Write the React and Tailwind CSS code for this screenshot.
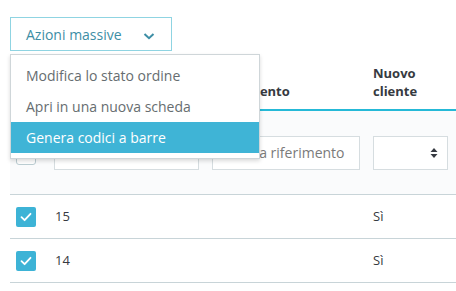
import React from "react";

const Check = () => (
  <span className="flex h-5 w-5 items-center justify-center rounded-[2px] bg-[#3db3d6]">
    <svg width="14" height="14" viewBox="0 0 14 14" fill="none">
      <path d="M2.5 7.2 L5.6 10.2 L11.5 3.8" stroke="white" strokeWidth="1.8" strokeLinecap="round" strokeLinejoin="round" />
    </svg>
  </span>
);

const rows = ["15", "14"];

export default function App() {
  return (
    <div className="relative h-[291px] w-[456px] overflow-hidden bg-white pt-[17px] text-[14px] font-['Open_Sans',sans-serif]">
      <div className="pl-[10px]">
        <button className="flex h-[34px] w-[162px] items-center justify-between border border-[#8fd4e2] pl-[15px] pr-[15px] text-[#3d8ea5]">
          <span>Azioni massive</span>
          <svg className="mt-[3px]" width="14" height="10" viewBox="0 0 14 10" fill="none">
            <path d="M2.5 3 L7 7.2 L11.5 3" stroke="#3d8ea5" strokeWidth="2" />
          </svg>
        </button>
      </div>

      <div className="ml-[10px]">
        <div className="grid h-[60px] grid-cols-[44px_158px_161px_1fr] items-end border-b-2 border-[#25b9d7] pb-[9px] text-[13px] font-bold leading-[18px] text-[#363a41]">
          <div />
          <div>ID</div>
          <div>Riferimento</div>
          <div>
            Nuovo
            <br />
            cliente
          </div>
        </div>

        <div className="grid h-[84px] grid-cols-[44px_158px_161px_1fr] items-center border-b border-[#c8d4d8] bg-[#fafbfc]">
          <div className="pl-[6px] pt-[4px]">
            <span className="block h-5 w-5 rounded-[3px] border border-[#bbcdd2] bg-white" />
          </div>
          <div>
            <input className="h-[34px] w-[145px] border border-[#d6dde0] bg-white px-[7px] outline-none" />
          </div>
          <div>
            <input
              placeholder="Ricerca riferimento"
              className="h-[34px] w-[148px] border border-[#d6dde0] bg-white px-[7px] text-[#7a7a7a] outline-none placeholder:text-[#7a7a7a]"
            />
          </div>
          <div>
            <div className="flex h-[34px] w-[75px] items-center justify-end border border-[#d6dde0] bg-white pr-[9px]">
              <svg width="8" height="12" viewBox="0 0 8 12">
                <path d="M4 1 L7.5 5 L0.5 5 Z M4 11 L7.5 7 L0.5 7 Z" fill="#363a41" />
              </svg>
            </div>
          </div>
        </div>

        {rows.map((id) => (
          <div
            key={id}
            className="grid h-[44px] grid-cols-[44px_158px_161px_1fr] items-center border-b border-[#c8d4d8] text-[#363a41]"
          >
            <div className="pl-[6px]">
              <Check />
            </div>
            <div className="pl-[1px] text-[13px]">{id}</div>
            <div />
            <div className="text-[13px]">Sì</div>
          </div>
        ))}
      </div>

      <div className="absolute left-[10px] top-[54px] w-[250px] border border-[#cfd6d9] bg-white py-[5px] text-[#666d70] shadow-[0_2px_4px_rgba(0,0,0,0.15)]">
        <div className="flex h-[31px] items-center pl-[15px]">Modifica lo stato ordine</div>
        <div className="flex h-[31px] items-center pl-[15px]">Apri in una nuova scheda</div>
        <div className="flex h-[31px] items-center bg-[#3fb4d6] pl-[15px] text-white">Genera codici a barre</div>
      </div>
    </div>
  );
}
